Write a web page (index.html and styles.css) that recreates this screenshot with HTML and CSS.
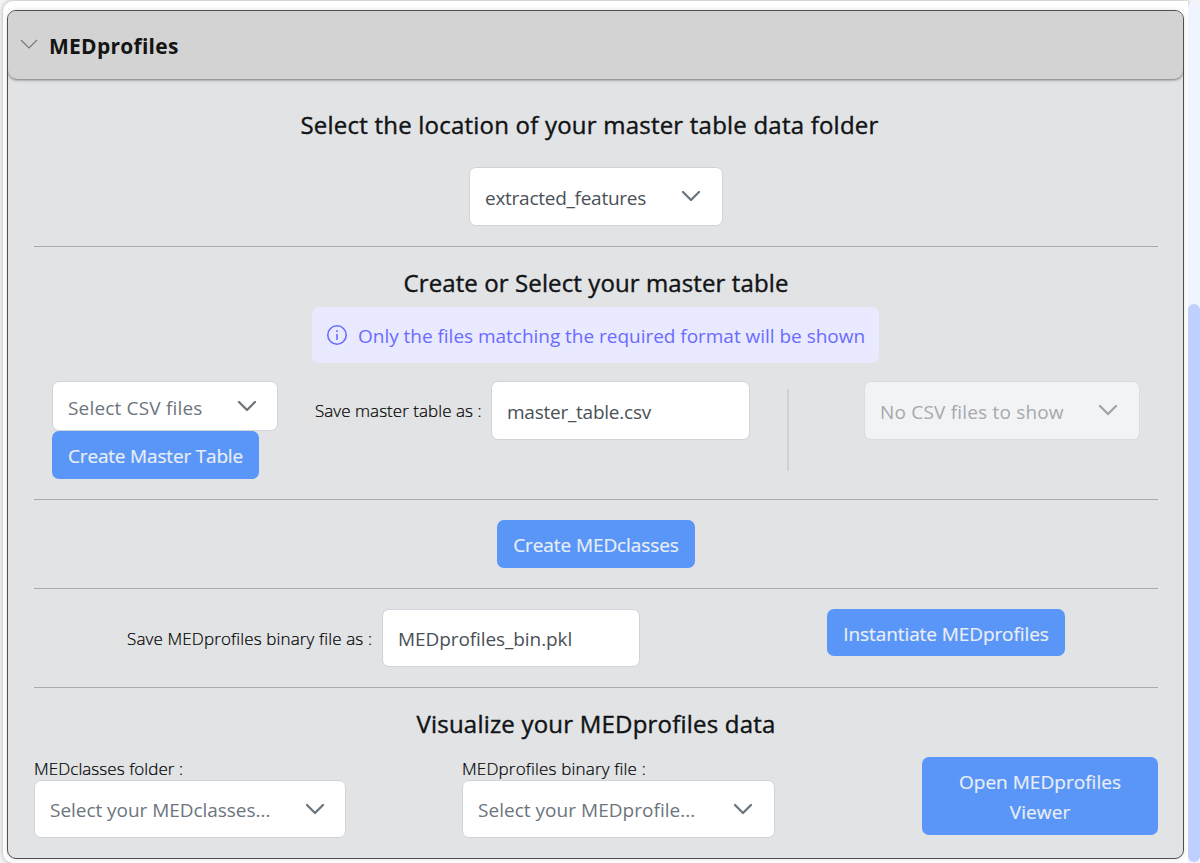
FILE: index.html
```html
<!DOCTYPE html>
<html lang="en">
<head>
<meta charset="utf-8">
<title>MEDprofiles</title>
<link rel="stylesheet" href="styles.css">
</head>
<body>
<div class="page">
  <main class="card">
    <section class="accordion">
      <header class="accordion-head">
        <svg class="head-chevron" width="18" height="11" viewBox="0 0 18 11"><path d="M1 1l8 8 8-8"/></svg>
        <span class="t t-head">MEDprofiles</span>
      </header>
      <div class="accordion-body">
        <div class="section s-location">
          <h2 class="title title-first"><span class="t t-h1">Select the location of your master table data folder</span></h2>
          <div class="field dropdown w-folder"><span class="t t-folder">extracted_features</span><svg class="chev" width="20" height="12" viewBox="0 0 20 12"><path d="M2 2l8 8 8-8"/></svg></div>
        </div>
        <div class="section s-table">
          <h2 class="title"><span class="t t-h2">Create or Select your master table</span></h2>
          <div class="message">
            <svg class="info" width="20" height="20" viewBox="0 0 20 20"><circle cx="10" cy="10" r="9.2"/><path d="M10 9v6M10 5.2v1.7"/></svg>
            <span class="t t-info">Only the files matching the required format will be shown</span>
          </div>
          <div class="table-row">
            <div class="create-col">
              <div class="field dropdown w-csv"><span class="t placeholder t-csv">Select CSV files</span><svg class="chev" width="20" height="12" viewBox="0 0 20 12"><path d="M2 2l8 8 8-8"/></svg></div>
              <button class="btn b-table"><span class="t t-btable">Create Master Table</span></button>
            </div>
            <label class="label label-table"><span class="t t-ltable">Save master table as :</span></label>
            <div class="field w-name"><span class="t t-name">master_table.csv</span></div>
            <div class="divider"></div>
            <div class="field dropdown disabled w-none"><span class="t placeholder t-none">No CSV files to show</span><svg class="chev" width="20" height="12" viewBox="0 0 20 12"><path d="M2 2l8 8 8-8"/></svg></div>
          </div>
        </div>
        <div class="section s-classes">
          <button class="btn b-classes"><span class="t t-bclasses">Create MEDclasses</span></button>
        </div>
        <div class="section s-binary">
          <label class="label"><span class="t t-lbin">Save MEDprofiles binary file as :</span></label>
          <div class="field w-bin"><span class="t t-bin">MEDprofiles_bin.pkl</span></div>
          <button class="btn b-inst"><span class="t t-inst">Instantiate MEDprofiles</span></button>
        </div>
        <div class="section s-view">
          <h2 class="title"><span class="t t-h3">Visualize your MEDprofiles data</span></h2>
          <div class="view-row">
            <div class="stack">
              <label class="label"><span class="t t-lfolder">MEDclasses folder :</span></label>
              <div class="field dropdown"><span class="t placeholder t-selc">Select your MEDclasses...</span><svg class="chev" width="20" height="12" viewBox="0 0 20 12"><path d="M2 2l8 8 8-8"/></svg></div>
            </div>
            <div class="stack stack-file">
              <label class="label"><span class="t t-lfile">MEDprofiles binary file :</span></label>
              <div class="field dropdown"><span class="t placeholder t-selp">Select your MEDprofile...</span><svg class="chev" width="20" height="12" viewBox="0 0 20 12"><path d="M2 2l8 8 8-8"/></svg></div>
            </div>
            <button class="btn b-view"><span class="t t-open">Open MEDprofiles</span><span class="t t-viewer">Viewer</span></button>
          </div>
        </div>
      </div>
    </section>
  </main>
  <aside class="scroll-track"><div class="scroll-thumb"></div></aside>
</div>
</body>
</html>
```
FILE: styles.css
```css
* { box-sizing: border-box; }
body { margin: 0; background: #fff; font-family: "Open Sans", sans-serif; overflow: hidden; }
.page { display: flex; width: 1200px; height: 863px; background: #f3f3f3; padding: 1px 0 0 3px; }
.card { width: 1185px; height: 862px; padding: 9px 4px 4px; background: #fff; border-radius: 10px 0 0 10px; box-shadow: 0 0 4px rgba(0, 0, 0, .3); }
.accordion { width: 1177px; height: 849px; border: 1px solid #4f4f51; border-radius: 9px; background: #e1e3e5; overflow: hidden; box-shadow: 0 0 5px rgba(0, 0, 0, .12); }
.accordion-head { display: flex; align-items: center; height: 68px; margin-bottom: 1px; padding: 1px 0 0 12px; background: #d3d3d3; border-radius: 0 0 9px 9px; box-shadow: 0 1px 3px rgba(0, 0, 0, .5); }
.head-chevron { margin: -3px 11px 0 0; fill: none; stroke: #777; stroke-width: 1.1; }

/* Text runs, each tracked to its own width */
.t { display: inline-block; white-space: nowrap; }
.t-head { font-size: 21px; font-weight: 700; color: #141414; letter-spacing: .26px; }
.t-h1 { letter-spacing: .215px; }
.t-h2 { letter-spacing: .108px; }
.t-h3 { letter-spacing: .204px; }
.t-folder { letter-spacing: -.263px; }
.t-info { letter-spacing: -.026px; }
.t-csv { letter-spacing: .17px; }
.t-btable { letter-spacing: -.174px; }
.t-ltable { letter-spacing: .04px; }
.t-name { letter-spacing: -.237px; }
.t-none { letter-spacing: .19px; }
.t-bclasses { letter-spacing: -.09px; }
.t-lbin { letter-spacing: .13px; }
.t-bin { letter-spacing: -.08px; }
.t-inst { letter-spacing: -.09px; }
.t-lfolder { letter-spacing: .06px; }
.t-lfile { letter-spacing: .17px; }
.t-selc { letter-spacing: -.04px; }
.t-selp { letter-spacing: .03px; }
.t-open { letter-spacing: .03px; }
.t-viewer { letter-spacing: .1px; }

.accordion-body { padding: 0 25px 0 26px; }
.section { width: 1124px; border-bottom: 1px solid #a9acae; }
.title { margin: 0; height: 36px; font-size: 24px; line-height: 36px; font-weight: 400; color: #111315; text-align: center; -webkit-text-stroke: .4px #111315; }
.title-first { padding-right: 13px; }
.field { display: flex; align-items: center; height: 59px; padding: 3px 21px 0 15px; background: #fff; border: 1px solid #ced4da; border-radius: 7px; font-size: 19px; color: #495057; }
.dropdown { justify-content: space-between; }
.placeholder { color: #6c757d; }
.chev { flex: none; margin-top: -4px; fill: none; stroke: #6c757d; stroke-width: 2.3; stroke-linecap: round; stroke-linejoin: round; }
.btn { display: flex; flex-direction: column; align-items: center; justify-content: center; height: 48px; padding: 1px 0 0; border: 0; border-radius: 7px; background: #5996f7; color: #e9eef5; font: 19px/30px "Open Sans", sans-serif; -webkit-text-stroke: .2px #e9eef5; }
.label { font-size: 17px; line-height: 24px; font-weight: 300; color: #000; -webkit-text-stroke: .2px #000; }

.s-location { height: 167px; padding-top: 27px; }
.w-folder { width: 254px; margin: 24px auto 0; }

.s-table { height: 253px; padding-top: 18px; }
.message { display: flex; align-items: center; width: 567px; height: 56px; margin: 6px 0 0 278px; padding: 1px 0 0 15px; gap: 11px; background: #e9e9ff; border-radius: 7px; color: #696cff; font-size: 19px; }
.info { margin-top: -2px; fill: none; stroke: #696cff; stroke-width: 1.6; }
.table-row { display: flex; align-items: flex-start; padding: 18px 18px 0; }
.create-col { width: 226px; }
.w-csv { width: 226px; height: 50px; padding-right: 20px; }
.b-table { width: 207px; }
.label-table { margin: 18px 0 0 37px; }
.t-ltable { width: 167px; }
.w-name { width: 259px; margin-left: 9px; }
.divider { width: 2px; height: 82px; margin: 8px 75px 0 37px; background: #cfd1d3; }
.w-none { width: 276px; }
.disabled { background: #f2f3f5; border-color: #dadddf; }
.disabled .placeholder { color: #a4a9ad; }
.disabled .chev { stroke: #a0a5ab; }

.s-classes { height: 89px; padding-top: 20px; }
.b-classes { width: 198px; margin: 0 auto; }

.s-binary { display: flex; align-items: flex-start; height: 99px; padding: 20px 0 0 93px; }
.s-binary .label { margin-top: 18px; }
.t-lbin { width: 246px; }
.w-bin { width: 258px; height: 58px; margin-left: 9px; padding-top: 1px; }
.b-inst { width: 238px; height: 47px; margin-left: 187px; padding-top: 2px; }

.s-view { border-bottom: 0; padding-top: 18px; }
.view-row { display: flex; padding-top: 15px; }
.stack { display: flex; flex-direction: column; width: 312px; }
.stack-file { margin-left: 116px; width: 313px; }
.stack .label { height: 23px; }
.stack .field { height: 58px; padding-top: 1px; padding-right: 20px; }
.stack-file .field { padding-right: 21px; }
.stack .chev { margin-top: -2px; }
.b-view { width: 236px; height: 78px; margin-left: 147px; }

.scroll-track { width: 12px; height: 862px; padding-top: 303px; background: #f0f4ff; border-radius: 6px 6px 0 0; position: relative; }
.scroll-thumb { height: 558px; background: #bfd0ff; border-radius: 6px; }
```
